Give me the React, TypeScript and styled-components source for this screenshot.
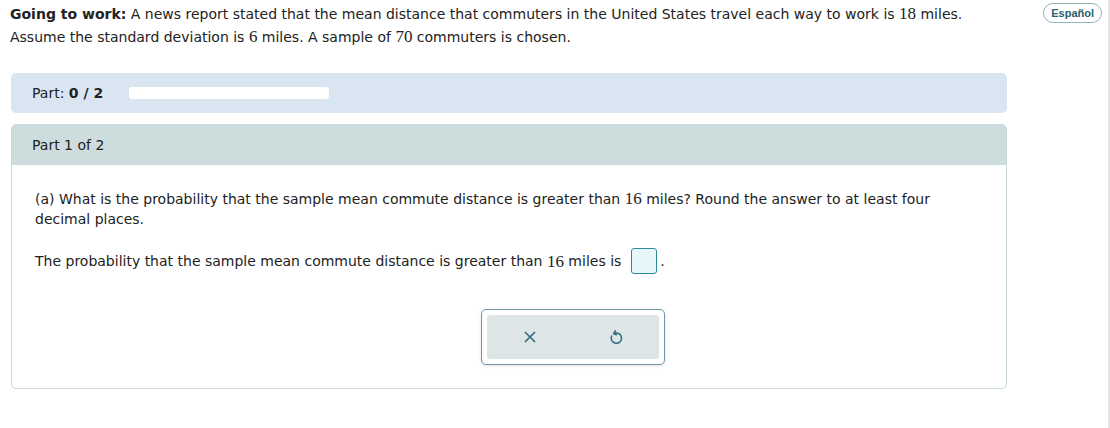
import styled, { createGlobalStyle } from "styled-components";

const GlobalStyle = createGlobalStyle`
  body {
    margin: 0;
    background: #ffffff;
    font-family: "DejaVu Sans", Verdana, sans-serif;
    color: #222222;
  }
`;

const Page = styled.div`
  width: 1108px;
  height: 428px;
  border-right: 2px solid #e6e6e6;
  box-sizing: content-box;
`;

const Header = styled.div`
  display: flex;
  align-items: flex-start;
  padding: 3px 6px 0 10px;
`;

const Intro = styled.p`
  flex: 1;
  margin: 0;
  max-width: 990px;
  font-size: 14px;
  line-height: 23px;
`;

const Lang = styled.button`
  margin-left: auto;
  height: 20px;
  padding: 0 7px;
  border: 1px solid #93b3b9;
  border-radius: 10px;
  background: #ffffff;
  color: #2b6070;
  font-family: "Liberation Sans", Arial, sans-serif;
  font-weight: 700;
  font-size: 11px;
`;

const Num = styled.span`
  font-family: "Liberation Serif", "Times New Roman", serif;
  font-size: 17px;
  line-height: 1;
`;

const Main = styled.div`
  display: flex;
  flex-direction: column;
  gap: 11px;
  width: 996px;
  margin: 24px 0 0 11px;
`;

const PartBar = styled.div`
  display: flex;
  align-items: center;
  gap: 26px;
  height: 40px;
  padding-left: 21px;
  border-radius: 5px;
  background: #d9e6f1;
  font-size: 14px;
`;

const Progress = styled.div`
  width: 200px;
  height: 12px;
  border-radius: 3px;
  background: #ffffff;
`;

const PartBox = styled.div`
  border: 1px solid #c9d9da;
  border-radius: 5px;
  overflow: hidden;
`;

const PartHead = styled.div`
  display: flex;
  align-items: center;
  height: 40px;
  padding-left: 20px;
  background: #cddcdd;
  font-size: 14px;
`;

const PartBody = styled.div`
  padding: 24px 23px 23px;
  font-size: 14px;
  line-height: 20px;
`;

const Question = styled.p`
  margin: 0;
  max-width: 920px;
`;

const AnswerLine = styled.p`
  display: flex;
  align-items: center;
  margin: 19px 0 0;
`;

const AnswerBox = styled.span`
  display: inline-block;
  width: 24px;
  height: 24px;
  margin: 0 3px 0 10px;
  border: 1px solid #2b8b9b;
  border-radius: 3px;
  background: #e6f6f9;
`;

const Tools = styled.div`
  display: flex;
  width: 172px;
  margin: 35px 0 0 446px;
  padding: 5px;
  border: 1px solid #6e99a3;
  border-radius: 5px;
  background: #ffffff;
  box-shadow: 0 1px 3px rgba(0, 0, 0, 0.12);
`;

const ToolButton = styled.button`
  flex: 1;
  display: flex;
  align-items: center;
  justify-content: center;
  height: 44px;
  border: none;
  background: #dde5e7;
  padding: 0;
  &:first-child {
    border-radius: 3px 0 0 3px;
  }
  &:last-child {
    border-radius: 0 3px 3px 0;
  }
`;

const App = () => {
    return (
        <Page>
            <GlobalStyle/>
            <Header>
                <Intro>
                    <b>Going to work:</b> A news report stated that the mean distance that commuters in the United States travel each way to work is <Num>18</Num> miles. Assume the standard deviation is <Num>6</Num> miles. A sample of <Num>70</Num> commuters is chosen.
                </Intro>
                <Lang>Español</Lang>
            </Header>
            <Main>
                <PartBar>
                    <span>Part: <b>0 / 2</b></span>
                    <Progress/>
                </PartBar>
                <PartBox>
                    <PartHead>Part 1 of 2</PartHead>
                    <PartBody>
                        <Question>(a) What is the probability that the sample mean commute distance is greater than <Num>16</Num> miles? Round the answer to at least four decimal places.</Question>
                        <AnswerLine>
                            The probability that the sample mean commute distance is greater than&nbsp;<Num>16</Num>&nbsp;miles is
                            <AnswerBox/>.
                        </AnswerLine>
                        <Tools>
                            <ToolButton aria-label="clear">
                                <svg width="14" height="14" viewBox="0 0 14 14">
                                    <path d="M2 2 L12 12 M12 2 L2 12" stroke="#2e6b7a" strokeWidth="1.6" fill="none"/>
                                </svg>
                            </ToolButton>
                            <ToolButton aria-label="undo">
                                <svg width="14" height="16" viewBox="0 0 14 16">
                                    <path d="M5 4.5 A5.2 5.2 0 1 1 2.6 7" stroke="#2e6b7a" strokeWidth="1.5" fill="none" strokeLinecap="round"/>
                                    <path d="M6.5 1.8 L4.6 4.5 L7.4 5.8" stroke="#2e6b7a" strokeWidth="1.5" fill="none" strokeLinecap="round" strokeLinejoin="round"/>
                                </svg>
                            </ToolButton>
                        </Tools>
                    </PartBody>
                </PartBox>
            </Main>
        </Page>
    );
};

export default App;
